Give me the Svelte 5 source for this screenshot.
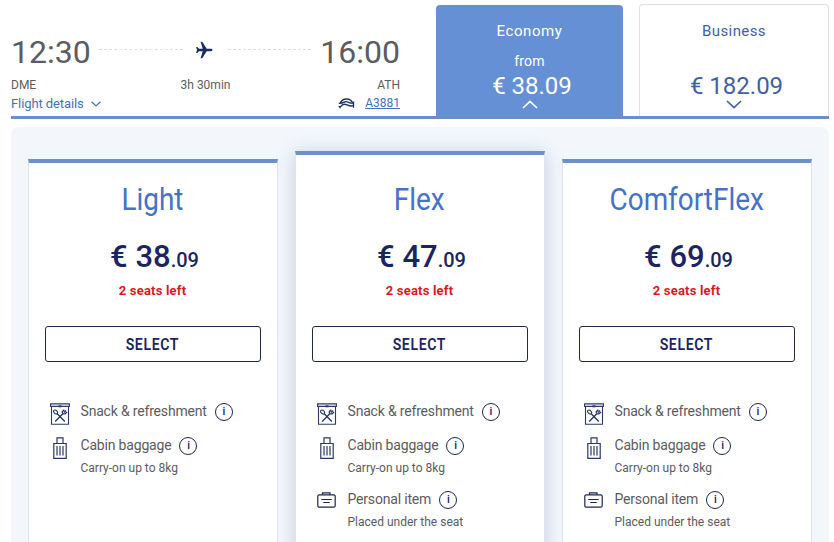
<script lang="ts">
	type Icon = 'snack' | 'cabin' | 'personal';

	interface Feature {
		icon: Icon;
		label: string;
		note?: string;
	}

	interface Fare {
		name: string;
		whole: string;
		cents: string;
		featured?: boolean;
		features: Feature[];
	}

	const snack: Feature = { icon: 'snack', label: 'Snack & refreshment' };
	const cabin: Feature = { icon: 'cabin', label: 'Cabin baggage', note: 'Carry-on up to 8kg' };
	const personal: Feature = { icon: 'personal', label: 'Personal item', note: 'Placed under the seat' };

	const fares: Fare[] = [
		{ name: 'Light', whole: '38', cents: '09', features: [snack, cabin] },
		{ name: 'Flex', whole: '47', cents: '09', featured: true, features: [snack, cabin, personal] },
		{ name: 'ComfortFlex', whole: '69', cents: '09', features: [snack, cabin, personal] },
	];
</script>

{#snippet chevron(up: boolean, size: number)}
	<svg class="chevron" width={size} height={size / 2 + 1} viewBox="0 0 16 9" fill="none" stroke="currentColor" stroke-width={size < 12 ? 2 : 1.7}>
		<path d={up ? 'M1 8l7-6.5L15 8' : 'M1 1l7 6.5L15 1'} />
	</svg>
{/snippet}

<div class="page">
	<header class="flight">
		<div class="route">
			<div class="times">
				<span>12:30</span>
				<i class="dash"></i>
				<svg class="plane" width="18" height="18" viewBox="0 0 18 18" fill="#1c2b66">
					<path d="M17.4 9c0-.8-.6-1.2-1.4-1.2h-4.3L7.3.8H5.6l2.1 7H3.9L2.4 5.9H1.1L2 9l-.9 3.1h1.3l1.5-1.9h3.8l-2.1 7h1.7l4.4-7H16c.8 0 1.4-.4 1.4-1.2z" />
				</svg>
				<i class="dash"></i>
				<span>16:00</span>
			</div>
			<div class="airports">
				<span>DME</span>
				<span>3h 30min</span>
				<span class="end">ATH</span>
			</div>
			<div class="links">
				<a class="details" href="#details">Flight details {@render chevron(false, 10)}</a>
				<span class="carrier">
					<svg width="17" height="11" viewBox="0 0 17 11" fill="none" stroke="#1c3560" stroke-width="1.4">
						<path d="M2.300 5.300C3.200 2.500 5.500 1 8.500 1s5.200 1.500 6.200 4.200" />
						<path d="M.6 8.600h2c1.500-2.300 4-2.900 6.500-1.700 2.200 1.100 4 1.600 6 .8" />
						<path d="M.8 5.400c3 .2 4.400-.6 6-1.500 2-1 4 .9 5.700 1.100 1.300.2 2.500-.1 3-.5v5.300" />
						<path d="M2 10.200V8.600" />
					</svg>
					<a href="#flight">A3881</a>
				</span>
			</div>
		</div>
		<button class="cabin economy">
			<span class="cabin-name">Economy</span>
			<span class="from">from</span>
			<span class="cabin-price">€ 38.09</span>
			{@render chevron(true, 16)}
		</button>
		<button class="cabin business">
			<span class="cabin-name">Business</span>
			<span class="from"></span>
			<span class="cabin-price">€ 182.09</span>
			{@render chevron(false, 16)}
		</button>
	</header>

	<main class="fares">
		{#each fares as fare (fare.name)}
			<section class="fare" class:featured={fare.featured}>
				<h2><span>{fare.name}</span></h2>
				<p class="price">€ {fare.whole}<small>.{fare.cents}</small></p>
				<p class="seats">2 seats left</p>
				<button class="select"><span>SELECT</span></button>
				<ul>
					{#each fare.features as feature}
						<li>
							<span class="icon">
								{#if feature.icon === 'snack'}
									<svg width="20" height="22" viewBox="0 0 20 22" fill="none" stroke="#2b3768" stroke-width="1.1">
										<path d="M.6.9h18.800v2.500H.6zM1.500 3.400v17.800h17V3.400" />
										<path d="M8.500 3.300h3" stroke-width="2" />
										<path d="M7 10.600l7.800 7.800M13 10.600l-7.800 7.800" stroke-width="1.400" />
										<ellipse cx="5.600" cy="9" rx="2.300" ry="1.600" transform="rotate(45 5.600 9)" />
										<path d="M12.500 10.500l-.2-1.700 2-2M14 9.500l2-2M13 10.800l2 .1 2-2" stroke-width="1.400" />
									</svg>
								{:else if feature.icon === 'cabin'}
									<svg width="14" height="22" viewBox="0 0 14 22" fill="none" stroke="#2b3768" stroke-width="1.200">
										<path d="M.8 6.500h12.400v14.900H.8zM4 6.500V.8h6v5.700M4 9v9.500M7 9v9.500M10 9v9.500" />
									</svg>
								{:else}
									<svg class="low" width="19" height="16" viewBox="0 0 19 16" fill="none" stroke="#1c2550" stroke-width="1.200">
										<rect x=".8" y="2.800" width="17.400" height="12.400" rx="1.500" />
										<path d="M5.500 2.800V.9h7.500v1.900M4.300 7.500h10.400M6.300 10.500h6.400" />
									</svg>
								{/if}
							</span>
							<div class="text">
								<div class="label">
									{feature.label}
									<span class="info">i</span>
								</div>
								{#if feature.note}
									<div class="note">{feature.note}</div>
								{/if}
							</div>
						</li>
					{/each}
				</ul>
			</section>
		{/each}
	</main>
</div>

<style>
	:global(body) {
		margin: 0;
		background: #fff;
	}

	.page {
		box-sizing: border-box;
		height: 542px;
		padding: 0 5px 0 11px;
		overflow: hidden;
		display: flex;
		flex-direction: column;
		font-family: Roboto, "Liberation Sans", sans-serif;
		color: #5a5c60;
	}

	button {
		font: inherit;
		box-sizing: border-box;
		margin: 0;
		padding: 0;
	}

	.chevron {
		display: block;
	}

	/* Flight summary */
	.flight {
		box-sizing: border-box;
		height: 119px;
		flex: none;
		display: grid;
		grid-template-columns: 389px 223px 206px;
		border-bottom: 3px solid #6a8fcb;
	}

	.route {
		padding-top: 34px;
	}

	.times {
		display: flex;
		align-items: center;
		font-size: 32px;
		line-height: 36px;
	}

	.dash {
		flex: 1;
		margin: 0 9px 5px 8px;
		border-top: 1px dashed #dcdfe4;
	}

	.plane {
		margin: 0 7px 4px 3px;
	}

	.airports {
		display: grid;
		grid-template-columns: 1fr auto 1fr;
		margin-top: 6px;
		font-size: 12px;
		line-height: 18px;
	}

	.end {
		text-align: right;
	}

	.links {
		display: flex;
		justify-content: space-between;
		font-size: 13px;
		line-height: 19px;
	}

	.links a {
		color: #4671b5;
	}

	.details {
		display: flex;
		align-items: center;
		gap: 7px;
		letter-spacing: -0.1px;
		text-decoration: none;
	}

	.carrier {
		display: flex;
		align-items: center;
		gap: 10px;
		font-size: 12px;
	}

	.cabin {
		display: flex;
		flex-direction: column;
		align-items: center;
		border-radius: 4px 4px 0 0;
		letter-spacing: 0.4px;
	}

	.economy {
		margin-top: 5px;
		margin-left: 36px;
		width: 187px;
		padding-top: 16px;
		border: 0;
		background: #6690d5;
		color: #fff;
	}

	.business {
		margin-top: 4px;
		margin-left: 16px;
		width: 190px;
		padding-top: 16px;
		border: 1px solid #dcdfe5;
		border-bottom: 0;
		background: #fff;
		color: #4260a3;
	}

	.cabin-name {
		font-size: 15px;
		line-height: 20px;
	}

	.economy .cabin-name {
		letter-spacing: 0.6px;
	}

	.from {
		height: 20px;
		margin-top: 10px;
		font-size: 14px;
		line-height: 20px;
		letter-spacing: 0.2px;
	}

	.cabin-price {
		padding: 1px 0 0 5px;
		font-size: 24px;
		line-height: 28px;
		letter-spacing: 0;
	}

	/* Fares */
	.fares {
		flex: 1;
		display: grid;
		grid-template-columns: repeat(3, 250px);
		column-gap: 17px;
		margin-top: 8px;
		padding: 32px 16.5px 0;
		border-radius: 8px 8px 0 0;
		background: #f3f7fc;
	}

	.fare {
		box-sizing: border-box;
		height: 400px;
		padding: 24px 16px 0;
		border: 1px solid #dfe4ee;
		border-top: 4px solid #6a92ca;
		background: #fff;
		text-align: center;
	}

	.featured {
		z-index: 1;
		height: 420px;
		margin-top: -8px;
		padding-top: 32px;
		box-shadow: 0 2px 18px rgba(58, 66, 140, 0.24);
	}

	h2 {
		margin: 0;
		font-size: 31px;
		font-weight: 400;
		line-height: 26px;
		color: #4572c6;
	}

	h2 span {
		display: inline-block;
		transform: scaleX(0.9);
	}

	.price {
		margin: 26px 0 0;
		padding-left: 4px;
		font-size: 31px;
		font-weight: 500;
		line-height: 36px;
		color: #1a2560;
	}

	.price small {
		font-size: 20px;
	}

	.seats {
		margin: 4px 0 0;
		font-size: 13px;
		font-weight: 700;
		line-height: 18px;
		letter-spacing: 0.2px;
		color: #e0161f;
	}

	.select {
		display: block;
		width: 216px;
		height: 36px;
		margin-top: 26px;
		border: 1px solid #1d2a45;
		border-radius: 3px;
		background: #fff;
		color: #1a2560;
		font-size: 16px;
		font-weight: 600;
		letter-spacing: 0.7px;
	}

	.select span {
		display: inline-block;
		transform: scaleX(0.88);
	}

	ul {
		margin: 38px 0 0;
		padding: 0;
		list-style: none;
		text-align: left;
	}

	li {
		display: flex;
		margin-bottom: 13px;
	}

	.icon {
		box-sizing: border-box;
		flex: none;
		display: flex;
		justify-content: center;
		align-items: flex-start;
		width: 30px;
		height: 21px;
		padding-top: 3px;
	}

	.low {
		margin-top: 1px;
	}

	.label {
		display: flex;
		align-items: center;
		gap: 8px;
		height: 21px;
		padding-left: 6px;
		font-size: 14px;
		line-height: 20px;
		letter-spacing: -0.18px;
	}

	.info {
		box-sizing: border-box;
		width: 18px;
		height: 18px;
		margin-top: 2px;
		border: 1px solid #1c2550;
		border-radius: 50%;
		color: #1c2550;
		font-size: 11px;
		font-weight: 500;
		line-height: 16px;
		text-align: center;
	}

	.note {
		margin-top: 6px;
		padding-left: 6px;
		font-size: 12px;
		line-height: 14px;
	}
</style>
